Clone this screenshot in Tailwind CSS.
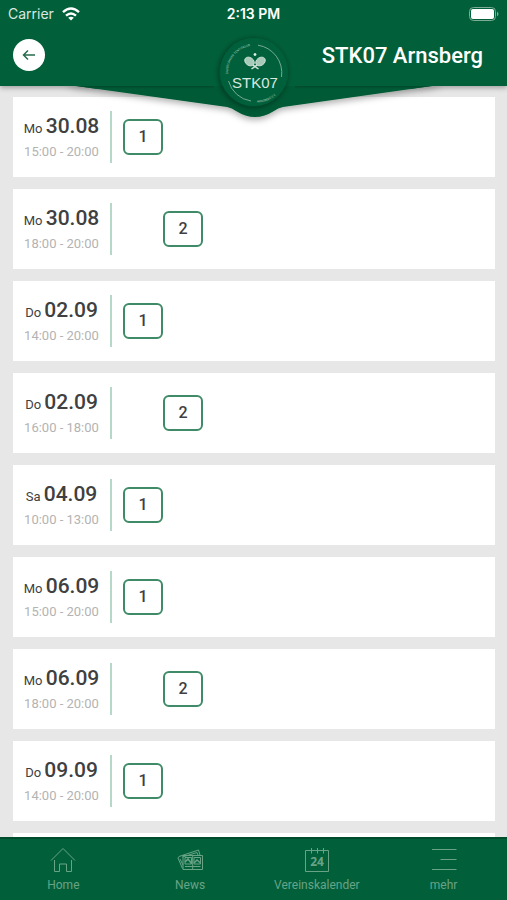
<!DOCTYPE html>
<html lang="de">
<head>
<meta charset="utf-8">
<meta name="viewport" content="width=device-width, initial-scale=1">
<title>STK07 Arnsberg</title>
<script src="https://cdn.jsdelivr.net/npm/@tailwindcss/browser@4"></script>
</head>
<body class="flex h-screen flex-col overflow-hidden bg-[#e7e7e7] font-[Roboto,sans-serif] text-[#404040]">
<header class="relative z-10 shrink-0 bg-[#01603a] text-white shadow-[0_2px_5px_rgba(0,0,0,0.3)]">
  <!-- Pennant and club badge -->
  <svg class="absolute top-0 left-1/2 -translate-x-1/2" width="400" height="130" viewBox="0 0 400 130" role="img" aria-label="STK07">
    <defs>
      <filter id="drop" x="-20%" y="-40%" width="140%" height="200%"><feDropShadow dx="0" dy="3" stdDeviation="3" flood-color="#000" flood-opacity=".3"/></filter>
      <filter id="disc" x="-30%" y="-30%" width="160%" height="160%"><feDropShadow dx="-1" dy="1" stdDeviation="3" flood-color="#00150c" flood-opacity=".5"/></filter>
      <linearGradient id="fold" x1="0" x2="0" y1="0" y2="1"><stop offset="0" stop-color="#004a2b"/><stop offset="1" stop-color="#005a36"/></linearGradient>
      <clipPath id="below"><rect y="86" width="400" height="44"/></clipPath>
      <path id="arcL" d="M174 74A27 27 0 0 1 206 46"/>
      <path id="arcR" d="M203 102.500A30 30 0 0 0 226 91"/>
    </defs>
    <g clip-path="url(#below)">
      <path filter="url(#drop)" d="M10 82L22 86L173 107Q178 108 182 111Q201 123 220 111Q224 108 229 107L378 86L390 82Z" fill="#005a36"/>
    </g>
    <path d="M22 86H160V89H44ZM241 86H378L356 89H241Z" fill="url(#fold)"/>
    <circle cx="200" cy="72" r="34" fill="#01603a" filter="url(#disc)"/>
    <g fill="none" stroke="#94bda9" stroke-width=".8">
      <path d="M204 45.200A28 28 0 0 1 227.500 77M174.500 81A27.500 27.500 0 0 0 197 101"/>
    </g>
    <g fill="#a9cbb9" font-family="Roboto,sans-serif" font-size="3">
      <text><textPath href="#arcL">SAUERLÄNDER TENNISKLUB</textPath></text>
      <text><textPath href="#arcR">ARNSBERG E.V.</textPath></text>
    </g>
    <g fill="#a8cbb9" stroke="#d5e6dd" stroke-width=".8">
      <ellipse cx="195.500" cy="61.500" rx="5.200" ry="3.900" transform="rotate(35 195.500 61.500)"/>
      <ellipse cx="206.500" cy="61.500" rx="5.200" ry="3.900" transform="rotate(-35 206.500 61.500)"/>
      <path d="M199 65L204.500 69M203 65L197.500 69" fill="none" stroke-width="1.500"/>
      <circle cx="201" cy="54.500" r="1.100" fill="#eef6f1"/>
    </g>
    <text x="201" y="88" text-anchor="middle" font-family="'Liberation Sans',sans-serif" font-size="15" fill="#d8e8e0">STK07</text>
  </svg>

  <div class="grid h-7 grid-cols-3 items-center px-2 font-[Inter,sans-serif] text-sm">
    <div class="flex items-center gap-2 text-[#d9e7e0]">
      <span>Carrier</span>
      <svg width="18" height="14" viewBox="0 0 18 14" aria-label="WLAN" fill="none" stroke="#fff" stroke-width="2.400"><path d="M1 5.200Q9-2 17 5.200M4 8.600Q9 4.200 14 8.600"/><path d="M9 13.500L6.200 10.700Q9 8.600 11.800 10.700Z" fill="#fff" stroke="none"/></svg>
    </div>
    <div class="text-center font-semibold">2:13 PM</div>
    <svg class="justify-self-end" width="30" height="14" viewBox="0 0 30 14" aria-label="Akku"><rect x=".5" y=".5" width="26" height="13" rx="4" fill="none" stroke="#7eac96"/><rect x="2" y="2" width="23" height="10" rx="2" fill="#fff"/><path d="M28 4.500Q31 7 28 9.500Z" fill="#7eac96"/></svg>
  </div>
  <div class="flex h-[58px] items-center justify-between pr-6 pb-1 pl-[13px]">
    <button type="button" aria-label="Zurück" class="flex size-8 items-center justify-center rounded-full bg-white">
      <svg width="14" height="12" viewBox="0 0 14 12" fill="none" stroke="#276b4b" stroke-width="1.500"><path d="M13 6H2M6 1.500L1.500 6L6 10.500"/></svg>
    </button>
    <h1 class="text-[22px] font-medium">STK07 Arnsberg</h1>
  </div>
</header>

<main class="min-h-0 flex-1 overflow-hidden pt-[11px] pr-3 pl-[13px]">
  <ul id="slots" class="flex flex-col gap-3"></ul>
</main>

<nav class="relative z-10 grid shrink-0 grid-cols-4 border-t-2 border-[#004d2d] bg-[#01603a] pt-2 pb-[7px] text-xs text-[#69a386]">
  <a href="#home" class="flex flex-col items-center gap-1">
    <svg width="26" height="26" viewBox="0 0 26 26" fill="none" stroke="currentColor"><path d="M1 13.500L13 1.500L25 13.500M4.500 13V24.500H9.500V17H16.500V24.500H21.500V13"/></svg>
    <span>Home</span></a>
  <a href="#news" class="flex flex-col items-center gap-1">
    <svg width="26" height="26" viewBox="0 0 26 26" fill="none" stroke="currentColor"><path d="M6 8.500H25.500V22.500H6ZM8 10.500H14.500V17H8ZM17 10.500H23.500V17H17ZM8 19.500H23.500M15.700 9V22M2 9.500L21.500 3L23 8M2 9.500L1 11L5.500 21.500M5.500 10L20 5.500L21 8M3 12L6 18"/><path d="M8 15L11 12L14.500 16.500M17 16L20 13L23.500 16" stroke-width="1.500"/></svg>
    <span>News</span></a>
  <a href="#kalender" class="flex flex-col items-center gap-1">
    <svg width="26" height="26" viewBox="0 0 26 26" fill="none" stroke="currentColor"><path d="M7 3.500H1.500V24.500H24.500V3.500H7M7.500 1V6.500M13.500 1V6.500M19.500 1V6.500"/><text x="13" y="19" text-anchor="middle" font-family="'Open Sans',sans-serif" font-size="12" font-weight="700" fill="currentColor" stroke="none">24</text></svg>
    <span>Vereinskalender</span></a>
  <a href="#mehr" class="flex flex-col items-center gap-1">
    <svg width="26" height="26" viewBox="0 0 26 26" fill="none" stroke="currentColor"><path d="M1 2.500H25.500M9.500 12.500H25.500M1 22.500H25.500"/></svg>
    <span>mehr</span></a>
</nav>

<script>
const slots = [
  ["Mo", "30.08", "15:00 - 20:00", 1], ["Mo", "30.08", "18:00 - 20:00", 2],
  ["Do", "02.09", "14:00 - 20:00", 1], ["Do", "02.09", "16:00 - 18:00", 2],
  ["Sa", "04.09", "10:00 - 13:00", 1], ["Mo", "06.09", "15:00 - 20:00", 1],
  ["Mo", "06.09", "18:00 - 20:00", 2], ["Do", "09.09", "14:00 - 20:00", 1]
];
document.getElementById("slots").innerHTML = slots.map(([day, date, time, court]) => `
  <li class="flex items-center bg-white py-[14px]">
    <div class="flex h-[52px] w-[99px] flex-col items-center justify-end border-r-2 border-[#b5d8c9]">
      <div class="text-[13px] leading-6 whitespace-nowrap">${day} <span class="text-[21px] leading-6 font-medium">${date}</span></div>
      <time class="text-[13px] leading-[22px] text-[#b3b3b3]">${time}</time>
    </div>
    <div class="grid grid-cols-[40px_40px] pl-[11px]">
      <button type="button" aria-label="Platz ${court}" class="${court === 2 ? "col-start-2" : "col-start-1"} h-9 rounded-md border-2 border-[#3f8b68] text-base font-medium">${court}</button>
    </div>
  </li>`).join("") + `<li class="h-20 bg-white" aria-hidden="true"></li>`;
</script>
</body>
</html>
